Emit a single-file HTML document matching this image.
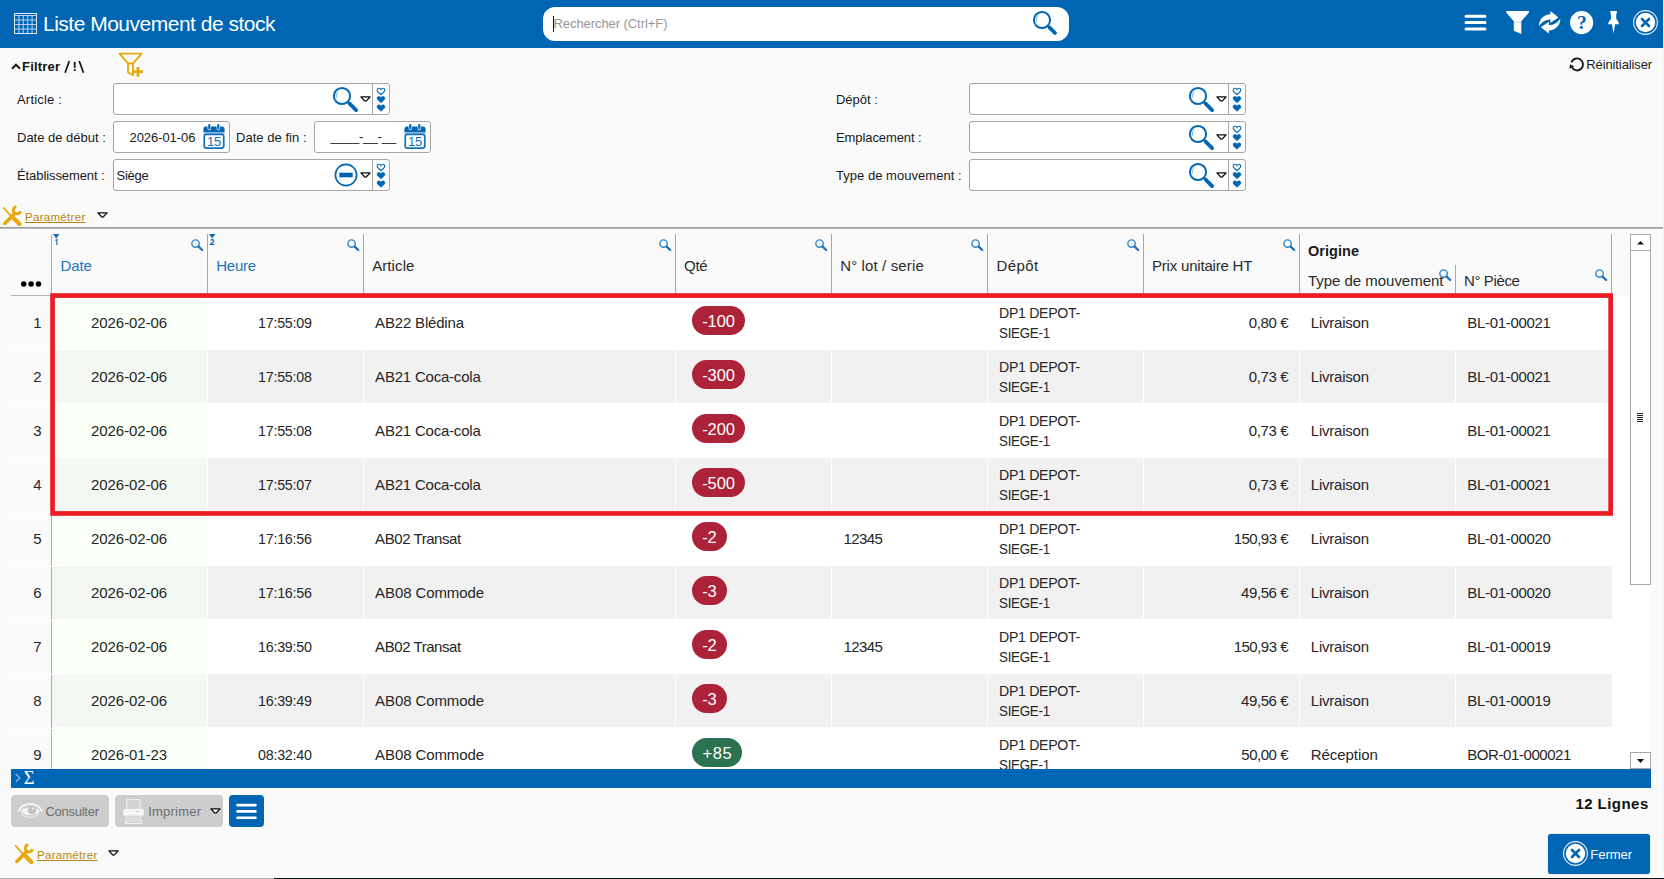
<!DOCTYPE html>
<html lang="fr">
<head>
<meta charset="utf-8">
<title>Liste Mouvement de stock</title>
<style>
*{box-sizing:border-box;margin:0;padding:0}
html,body{width:1664px;height:879px;overflow:hidden;background:#fafafa;font-family:"Liberation Sans",sans-serif;color:#1a1a1a}
body{position:relative}
div,span,i,b,u{position:absolute;white-space:nowrap}
svg{position:absolute;overflow:visible}
.t{transform-origin:0 50%}
#hdr{left:0;top:0;width:1663px;height:48px;background:#0066b3}
#search{left:543px;top:7px;width:525.5px;height:33.7px;background:#fff;border-radius:12px}
#search i{left:10px;top:9px;width:1px;height:16px;background:#112}
.inp{height:32px;width:277px;background:#fff;border:1px solid #a6a6a6;border-radius:3px}
.inp .sep{left:258px;top:0;width:1px;height:30px;background:#a6a6a6}
.hsep{width:1px;background:#a8a8a8}
.row{left:52px;width:1560px;height:54px}
.row.e{background:#f1f1f1;height:53px}
.row .d{left:1px;top:0;width:154px;height:53px;background:#fafff8}
.row.e .d{background:#f3f8f2}
.row.e u{top:0;width:1px;height:53px;background:#fff}
.nl{left:11px;width:41px;height:1px;background:#fff}
.bd{height:29px;border-radius:15px;background:#ac2239}
.bd.g{background:#2d7250}
.btn{height:32px;top:795px;border-radius:4px;background:#cdcdcd}
</style>
</head>
<body>
<div id="hdr">
<svg style="left:14px;top:13px" width="23" height="21" viewBox="0 0 23 21"><g fill="none"><rect x=".5" y=".5" width="22" height="20" stroke="#dfeaf5"/><path d="M.5 2.5h22M.5 7h22M.5 11.5h22M.5 16h22M4.9 2.5v18M9.3 2.5v18M13.7 2.5v18M18.1 2.5v18" stroke="#b9d2ea"/></g></svg>
<span style="top:12px;font-size:21px;line-height:24px;color:#fff;letter-spacing:-0.5px;left:43px;">Liste Mouvement de stock</span>
<div id="search"><i></i><span style="top:9px;font-size:13px;line-height:16px;color:#969696;letter-spacing:-0.07px;left:10.5px;">Rechercher (Ctrl+F)</span><svg style="left:489.1px;top:2.9000000000000004px" width="26" height="26" viewBox="-10 -10 26 26"><circle r="8.1" fill="#fff" stroke="#0066b3" stroke-width="2"/><path d="M-5.6 1.6a5.8 5.8 0 0 1 2.2 -6.4" fill="none" stroke="#7fb2dc" stroke-width="1"/><path d="M7.6 7.6L13 13" stroke="#0066b3" stroke-width="3.8" stroke-linecap="round"/><path d="M5.6 5.6l1.4 1.4" stroke="#0066b3" stroke-width="2"/></svg></div>
<svg style="left:1464px;top:14px" width="23" height="17" viewBox="0 0 23 17"><g stroke="#fff" stroke-width="3" stroke-linecap="round"><path d="M2 2.3h19M2 8.6h19M2 14.9h19"/></g></svg>
<svg style="left:1506px;top:10.9px" width="23.2" height="23.2" viewBox="0 0 23.2 23.2"><path d="M1.2 0h20.8c1 0 1.4 1 .8 1.7L15.3 10.2v12.9l-7.5-3.3v-9.6L.4 1.7C-.2 1 .2 0 1.2 0z" fill="#fff"/><path d="M8 11.1h7" stroke="#0066b3" stroke-width=".6" opacity=".45"/></svg>
<svg style="left:1539px;top:11px" width="21.4" height="23" viewBox="0 0 21.4 23"><g fill="#fff"><path d="M11.4 0L19.5 6.4L11.4 11.8V8.5C7 8.3 3 10.6 0 14.9C0 8 5 3.4 11.4 3.2Z"/><path d="M11.4 0L19.5 6.4L11.4 11.8V8.5C7 8.3 3 10.6 0 14.9C0 8 5 3.4 11.4 3.2Z" transform="rotate(180 10.65 11.3)"/></g></svg>
<svg style="left:1569.7px;top:10.8px" width="23.2" height="23.2" viewBox="-11.6 -11.6 23.2 23.2"><circle r="11.6" fill="#fff"/><text x="0.3" y="6.6" text-anchor="middle" font-family="Liberation Serif" font-weight="bold" font-size="19.5" fill="#0066b3">?</text></svg>
<svg style="left:1607.9px;top:10.8px" width="11.1" height="22.8" viewBox="0 0 11.1 22.8"><path d="M2.2 0H9L8.2 4.6V8C9.6 9.4 10.6 11 11.1 13.2H7.1L5.55 22.8L4 13.2H0C.5 11 1.5 9.4 3 8V4.6Z" fill="#fff"/></svg>
<svg style="left:1633px;top:9.899999999999999px" width="25" height="25" viewBox="-12.5 -12.5 25 25"><circle r="11.9" fill="none" stroke="#fff" stroke-width="1.1" opacity=".92"/><circle r="9.7" fill="#fff"/><path d="M-3.5 -3.5l7 7M3.5 -3.5l-7 7" stroke="#0066b3" stroke-width="2.6" stroke-linecap="round"/></svg>
</div>
<svg style="left:11px;top:62px" width="10" height="8" viewBox="0 0 10 8"><path d="M1 6.7L5 2.7l4 4" fill="none" stroke="#1c1c1c" stroke-width="2.1"/></svg>
<span style="top:59px;font-size:13px;line-height:16px;color:#111;font-weight:bold;letter-spacing:0.19px;left:22px;">Filtrer</span>
<span style="top:59px;font-size:13px;line-height:16px;color:#111;font-weight:bold;left:72.5px;">!</span>
<svg style="left:64px;top:60px" width="21" height="14" viewBox="0 0 21 14"><path d="M1.1 12.7L5.3 1M15.2 1L19.5 12.7" stroke="#111" stroke-width="1.7"/></svg>
<svg style="left:118px;top:52px" width="26" height="26" viewBox="0 0 26 26"><g fill="none" stroke="#e6a90a" stroke-width="1.8" stroke-linejoin="round"><path d="M1.5 1.7H23.7L15 11.4V23.3L10 20.2V11.4Z"/><path d="M10 11.4H15"/></g><path d="M20 14.9v9.9M15.2 19.7h9.7" stroke="#e6a90a" stroke-width="2.8"/></svg>
<svg style="left:1570px;top:57px" width="15" height="15" viewBox="0 0 15 15"><path d="M1.4 5.3A6 6 0 1 1 1.9 10.6" fill="none" stroke="#1c1c1c" stroke-width="1.9"/><path d="M-.800 11.7L.200 7.3L4.3 9.6Z" fill="#1c1c1c"/></svg>
<span style="top:57px;font-size:13px;line-height:16px;color:#1a1a1a;letter-spacing:-0.11px;left:1586.3px;">Réinitialiser</span>
<span style="top:92px;font-size:13px;line-height:16px;color:#1a1a1a;letter-spacing:0.19px;left:17px;">Article :</span>
<span style="top:130px;font-size:13px;line-height:16px;color:#1a1a1a;letter-spacing:-0.01px;left:17px;">Date de début :</span>
<span style="top:130px;font-size:13px;line-height:16px;color:#1a1a1a;letter-spacing:0.04px;left:236px;">Date de fin :</span>
<span style="top:168px;font-size:13px;line-height:16px;color:#1a1a1a;letter-spacing:-0.09px;left:17px;">Établissement :</span>
<span style="top:92px;font-size:13px;line-height:16px;color:#1a1a1a;letter-spacing:-0.02px;left:836px;">Dépôt :</span>
<span style="top:130px;font-size:13px;line-height:16px;color:#1a1a1a;letter-spacing:-0.09px;left:836px;">Emplacement :</span>
<span style="top:168px;font-size:13px;line-height:16px;color:#1a1a1a;letter-spacing:0.03px;left:836px;">Type de mouvement :</span>
<div class="inp" style="left:113px;top:83px"><svg style="left:218.2px;top:2px" width="26" height="26" viewBox="-10 -10 26 26"><circle r="8.1" fill="#fff" stroke="#0066b3" stroke-width="2"/><path d="M-5.6 1.6a5.8 5.8 0 0 1 2.2 -6.4" fill="none" stroke="#7fb2dc" stroke-width="1"/><path d="M7.6 7.6L14.1 14.1" stroke="#0066b3" stroke-width="3.8" stroke-linecap="round"/><path d="M5.6 5.6l1.4 1.4" stroke="#0066b3" stroke-width="2"/></svg><svg style="left:246px;top:12px" width="11" height="7" viewBox="0 0 11 7"><path d="M.900 .900H10.1L6.4 4.7Q5.5 5.5 4.6 4.7Z" fill="#fff" stroke="#0c0c0c" stroke-width="1.25" stroke-linejoin="round"/></svg><i class="sep"></i><svg style="left:262px;top:3.2px" width="10" height="26" viewBox="-5 -4 10 26"><g transform="scale(.92)"><path d="M0 -1.6C-0.9 -3.6 -4.2 -3.4 -4.2 -0.9C-4.2 1 -1.6 2.2 0 3.9C1.6 2.2 4.2 1 4.2 -0.9C4.2 -3.4 0.9 -3.6 0 -1.6z" fill="#fff" stroke="#0066b3" stroke-width="1.2"/></g><g transform="translate(0,8.2) scale(.92)"><path d="M0 -1.6C-0.9 -3.6 -4.2 -3.4 -4.2 -0.9C-4.2 1 -1.6 2.2 0 3.9C1.6 2.2 4.2 1 4.2 -0.9C4.2 -3.4 0.9 -3.6 0 -1.6z" fill="#0066b3" stroke="#0066b3" stroke-width=".800"/></g><g transform="translate(0,16.6) scale(.92)"><path d="M0 -1.6C-0.9 -3.6 -4.2 -3.4 -4.2 -0.9C-4.2 1 -1.6 2.2 0 3.9C1.6 2.2 4.2 1 4.2 -0.9C4.2 -3.4 0.9 -3.6 0 -1.6z" fill="#0066b3" stroke="#0066b3" stroke-width=".800"/></g></svg></div>
<div class="inp" style="left:113px;top:121px;width:117px"><span style="top:8px;font-size:13px;line-height:16px;color:#1a1a1a;letter-spacing:-0.07px;left:15.5px;">2026-01-06</span><svg style="left:88.6px;top:2px" width="22" height="25.2" viewBox="0 0 22 25.2"><path d="M.400 7.9V5a2.6 2.6 0 0 1 2.6-2.6h16a2.6 2.6 0 0 1 2.6 2.6V7.9z" fill="#0066b3"/><rect x=".400" y="7.9" width="21.2" height="1.8" fill="#7fb2dc"/><rect x="1.25" y="10.3" width="19.5" height="13.9" rx="2.1" fill="#fff" stroke="#1470bb" stroke-width="1.7"/><g fill="#0066b3" stroke="#fff" stroke-width="1.3" paint-order="stroke"><rect x="5.2" y="0" width="2.2" height="5.5" rx="1.1"/><rect x="14.2" y="0" width="2.2" height="5.5" rx="1.1"/></g><text x="11.1" y="21.9" text-anchor="middle" font-family="Liberation Sans" font-size="13" fill="#1470bb" letter-spacing="-.2">15</text></svg></div>
<div class="inp" style="left:314px;top:121px;width:117px"><span style="top:7.3px;font-size:13px;line-height:16px;color:#1a1a1a;letter-spacing:-0.09px;left:15.5px;">____-__-__</span><svg style="left:88.6px;top:2px" width="22" height="25.2" viewBox="0 0 22 25.2"><path d="M.400 7.9V5a2.6 2.6 0 0 1 2.6-2.6h16a2.6 2.6 0 0 1 2.6 2.6V7.9z" fill="#0066b3"/><rect x=".400" y="7.9" width="21.2" height="1.8" fill="#7fb2dc"/><rect x="1.25" y="10.3" width="19.5" height="13.9" rx="2.1" fill="#fff" stroke="#1470bb" stroke-width="1.7"/><g fill="#0066b3" stroke="#fff" stroke-width="1.3" paint-order="stroke"><rect x="5.2" y="0" width="2.2" height="5.5" rx="1.1"/><rect x="14.2" y="0" width="2.2" height="5.5" rx="1.1"/></g><text x="11.1" y="21.9" text-anchor="middle" font-family="Liberation Sans" font-size="13" fill="#1470bb" letter-spacing="-.2">15</text></svg></div>
<div class="inp" style="left:113px;top:159px"><span style="top:8px;font-size:13px;line-height:16px;color:#1a1a1a;letter-spacing:-0.26px;left:2.5px;">Siège</span><svg style="left:219.7px;top:3px" width="24" height="24" viewBox="0 0 24 24"><circle cx="12" cy="12" r="10.6" fill="#fff" stroke="#0066b3" stroke-width="1.7"/><rect x="5.3" y="9.7" width="13.4" height="4.6" fill="#0066b3"/></svg><svg style="left:246px;top:12px" width="11" height="7" viewBox="0 0 11 7"><path d="M.900 .900H10.1L6.4 4.7Q5.5 5.5 4.6 4.7Z" fill="#fff" stroke="#0c0c0c" stroke-width="1.25" stroke-linejoin="round"/></svg><i class="sep"></i><svg style="left:262px;top:3.2px" width="10" height="26" viewBox="-5 -4 10 26"><g transform="scale(.92)"><path d="M0 -1.6C-0.9 -3.6 -4.2 -3.4 -4.2 -0.9C-4.2 1 -1.6 2.2 0 3.9C1.6 2.2 4.2 1 4.2 -0.9C4.2 -3.4 0.9 -3.6 0 -1.6z" fill="#fff" stroke="#0066b3" stroke-width="1.2"/></g><g transform="translate(0,8.2) scale(.92)"><path d="M0 -1.6C-0.9 -3.6 -4.2 -3.4 -4.2 -0.9C-4.2 1 -1.6 2.2 0 3.9C1.6 2.2 4.2 1 4.2 -0.9C4.2 -3.4 0.9 -3.6 0 -1.6z" fill="#0066b3" stroke="#0066b3" stroke-width=".800"/></g><g transform="translate(0,16.6) scale(.92)"><path d="M0 -1.6C-0.9 -3.6 -4.2 -3.4 -4.2 -0.9C-4.2 1 -1.6 2.2 0 3.9C1.6 2.2 4.2 1 4.2 -0.9C4.2 -3.4 0.9 -3.6 0 -1.6z" fill="#0066b3" stroke="#0066b3" stroke-width=".800"/></g></svg></div>
<div class="inp" style="left:969px;top:83px"><svg style="left:218.2px;top:2px" width="26" height="26" viewBox="-10 -10 26 26"><circle r="8.1" fill="#fff" stroke="#0066b3" stroke-width="2"/><path d="M-5.6 1.6a5.8 5.8 0 0 1 2.2 -6.4" fill="none" stroke="#7fb2dc" stroke-width="1"/><path d="M7.6 7.6L14.1 14.1" stroke="#0066b3" stroke-width="3.8" stroke-linecap="round"/><path d="M5.6 5.6l1.4 1.4" stroke="#0066b3" stroke-width="2"/></svg><svg style="left:246px;top:12px" width="11" height="7" viewBox="0 0 11 7"><path d="M.900 .900H10.1L6.4 4.7Q5.5 5.5 4.6 4.7Z" fill="#fff" stroke="#0c0c0c" stroke-width="1.25" stroke-linejoin="round"/></svg><i class="sep"></i><svg style="left:262px;top:3.2px" width="10" height="26" viewBox="-5 -4 10 26"><g transform="scale(.92)"><path d="M0 -1.6C-0.9 -3.6 -4.2 -3.4 -4.2 -0.9C-4.2 1 -1.6 2.2 0 3.9C1.6 2.2 4.2 1 4.2 -0.9C4.2 -3.4 0.9 -3.6 0 -1.6z" fill="#fff" stroke="#0066b3" stroke-width="1.2"/></g><g transform="translate(0,8.2) scale(.92)"><path d="M0 -1.6C-0.9 -3.6 -4.2 -3.4 -4.2 -0.9C-4.2 1 -1.6 2.2 0 3.9C1.6 2.2 4.2 1 4.2 -0.9C4.2 -3.4 0.9 -3.6 0 -1.6z" fill="#0066b3" stroke="#0066b3" stroke-width=".800"/></g><g transform="translate(0,16.6) scale(.92)"><path d="M0 -1.6C-0.9 -3.6 -4.2 -3.4 -4.2 -0.9C-4.2 1 -1.6 2.2 0 3.9C1.6 2.2 4.2 1 4.2 -0.9C4.2 -3.4 0.9 -3.6 0 -1.6z" fill="#0066b3" stroke="#0066b3" stroke-width=".800"/></g></svg></div>
<div class="inp" style="left:969px;top:121px"><svg style="left:218.2px;top:2px" width="26" height="26" viewBox="-10 -10 26 26"><circle r="8.1" fill="#fff" stroke="#0066b3" stroke-width="2"/><path d="M-5.6 1.6a5.8 5.8 0 0 1 2.2 -6.4" fill="none" stroke="#7fb2dc" stroke-width="1"/><path d="M7.6 7.6L14.1 14.1" stroke="#0066b3" stroke-width="3.8" stroke-linecap="round"/><path d="M5.6 5.6l1.4 1.4" stroke="#0066b3" stroke-width="2"/></svg><svg style="left:246px;top:12px" width="11" height="7" viewBox="0 0 11 7"><path d="M.900 .900H10.1L6.4 4.7Q5.5 5.5 4.6 4.7Z" fill="#fff" stroke="#0c0c0c" stroke-width="1.25" stroke-linejoin="round"/></svg><i class="sep"></i><svg style="left:262px;top:3.2px" width="10" height="26" viewBox="-5 -4 10 26"><g transform="scale(.92)"><path d="M0 -1.6C-0.9 -3.6 -4.2 -3.4 -4.2 -0.9C-4.2 1 -1.6 2.2 0 3.9C1.6 2.2 4.2 1 4.2 -0.9C4.2 -3.4 0.9 -3.6 0 -1.6z" fill="#fff" stroke="#0066b3" stroke-width="1.2"/></g><g transform="translate(0,8.2) scale(.92)"><path d="M0 -1.6C-0.9 -3.6 -4.2 -3.4 -4.2 -0.9C-4.2 1 -1.6 2.2 0 3.9C1.6 2.2 4.2 1 4.2 -0.9C4.2 -3.4 0.9 -3.6 0 -1.6z" fill="#0066b3" stroke="#0066b3" stroke-width=".800"/></g><g transform="translate(0,16.6) scale(.92)"><path d="M0 -1.6C-0.9 -3.6 -4.2 -3.4 -4.2 -0.9C-4.2 1 -1.6 2.2 0 3.9C1.6 2.2 4.2 1 4.2 -0.9C4.2 -3.4 0.9 -3.6 0 -1.6z" fill="#0066b3" stroke="#0066b3" stroke-width=".800"/></g></svg></div>
<div class="inp" style="left:969px;top:159px"><svg style="left:218.2px;top:2px" width="26" height="26" viewBox="-10 -10 26 26"><circle r="8.1" fill="#fff" stroke="#0066b3" stroke-width="2"/><path d="M-5.6 1.6a5.8 5.8 0 0 1 2.2 -6.4" fill="none" stroke="#7fb2dc" stroke-width="1"/><path d="M7.6 7.6L14.1 14.1" stroke="#0066b3" stroke-width="3.8" stroke-linecap="round"/><path d="M5.6 5.6l1.4 1.4" stroke="#0066b3" stroke-width="2"/></svg><svg style="left:246px;top:12px" width="11" height="7" viewBox="0 0 11 7"><path d="M.900 .900H10.1L6.4 4.7Q5.5 5.5 4.6 4.7Z" fill="#fff" stroke="#0c0c0c" stroke-width="1.25" stroke-linejoin="round"/></svg><i class="sep"></i><svg style="left:262px;top:3.2px" width="10" height="26" viewBox="-5 -4 10 26"><g transform="scale(.92)"><path d="M0 -1.6C-0.9 -3.6 -4.2 -3.4 -4.2 -0.9C-4.2 1 -1.6 2.2 0 3.9C1.6 2.2 4.2 1 4.2 -0.9C4.2 -3.4 0.9 -3.6 0 -1.6z" fill="#fff" stroke="#0066b3" stroke-width="1.2"/></g><g transform="translate(0,8.2) scale(.92)"><path d="M0 -1.6C-0.9 -3.6 -4.2 -3.4 -4.2 -0.9C-4.2 1 -1.6 2.2 0 3.9C1.6 2.2 4.2 1 4.2 -0.9C4.2 -3.4 0.9 -3.6 0 -1.6z" fill="#0066b3" stroke="#0066b3" stroke-width=".800"/></g><g transform="translate(0,16.6) scale(.92)"><path d="M0 -1.6C-0.9 -3.6 -4.2 -3.4 -4.2 -0.9C-4.2 1 -1.6 2.2 0 3.9C1.6 2.2 4.2 1 4.2 -0.9C4.2 -3.4 0.9 -3.6 0 -1.6z" fill="#0066b3" stroke="#0066b3" stroke-width=".800"/></g></svg></div>
<svg style="left:2px;top:205px" width="21" height="21" viewBox="0 0 21 21"><g stroke="#e8a80c" stroke-linecap="round" fill="none"><path d="M2.8 18.4L11.8 9.4" stroke-width="3.5"/><path d="M18.6 6.2a3.7 3.7 0 1 1 -4.3 -4.6" stroke-width="2.7" stroke-linecap="butt"/><path d="M1.6 2.9L9.6 11.6" stroke-width="1.6"/><path d="M11.9 13.5l5.5 5.5" stroke-width="4.2"/></g></svg>
<span style="top:210px;font-size:11.5px;line-height:15px;color:#b5850f;letter-spacing:0.3px;left:25px;text-decoration:underline;text-underline-offset:.600px;">Paramétrer</span>
<svg style="left:96.7px;top:212px" width="11" height="7" viewBox="0 0 11 7"><path d="M.900 .900H10.1L6.4 4.7Q5.5 5.5 4.6 4.7Z" fill="#fff" stroke="#0c0c0c" stroke-width="1.25" stroke-linejoin="round"/></svg>
<div style="left:0;top:227px;width:1663px;height:2px;background:linear-gradient(#8e8e8e,#c9c9c9)"></div>
<i class="hsep" style="left:51px;top:234px;height:535px;background:#adadad"></i>
<i class="hsep" style="left:207px;top:234px;height:59px"></i>
<i class="hsep" style="left:363px;top:234px;height:59px"></i>
<i class="hsep" style="left:675px;top:234px;height:59px"></i>
<i class="hsep" style="left:831px;top:234px;height:59px"></i>
<i class="hsep" style="left:987px;top:234px;height:59px"></i>
<i class="hsep" style="left:1143px;top:234px;height:59px"></i>
<i class="hsep" style="left:1299px;top:234px;height:59px"></i>
<i class="hsep" style="left:1455px;top:265px;height:28px"></i>
<i class="hsep" style="left:1611px;top:234px;height:59px"></i>
<span style="top:257px;font-size:15px;line-height:18px;color:#1e73be;letter-spacing:-0.13px;left:60.5px;">Date</span>
<span style="top:257px;font-size:15px;line-height:18px;color:#1e73be;letter-spacing:-0.29px;left:216.3px;">Heure</span>
<span style="top:257px;font-size:15px;line-height:18px;color:#2b2b2b;letter-spacing:0.09px;left:372.2px;">Article</span>
<span style="top:257px;font-size:15px;line-height:18px;color:#2b2b2b;letter-spacing:-0.29px;left:684px;">Qté</span>
<span style="top:257px;font-size:15px;line-height:18px;color:#2b2b2b;letter-spacing:0.13px;left:840.2px;">N° lot / serie</span>
<span style="top:257px;font-size:15px;line-height:18px;color:#2b2b2b;letter-spacing:0.44px;left:996.4px;">Dépôt</span>
<span style="top:257px;font-size:15px;line-height:18px;color:#2b2b2b;letter-spacing:-0.2px;left:1152px;">Prix unitaire HT</span>
<span style="top:242px;font-size:14.5px;line-height:18px;color:#1a1a1a;font-weight:bold;letter-spacing:0.04px;left:1308px;">Origine</span>
<span style="top:272px;font-size:15px;line-height:18px;color:#2b2b2b;letter-spacing:-0.03px;left:1308px;">Type de mouvement</span>
<span style="top:272px;font-size:15px;line-height:18px;color:#2b2b2b;letter-spacing:-0.38px;left:1464px;">N° Pièce</span>
<svg style="left:191px;top:239px" width="12.4" height="12.4" viewBox="0 0 13 13"><circle cx="4.8" cy="4.8" r="3.9" fill="none" stroke="#2e86cf" stroke-width="1.5"/><path d="M8 8l3.8 3.6" stroke="#1b6fb8" stroke-width="2.2" stroke-linecap="round"/></svg>
<svg style="left:347px;top:239px" width="12.4" height="12.4" viewBox="0 0 13 13"><circle cx="4.8" cy="4.8" r="3.9" fill="none" stroke="#2e86cf" stroke-width="1.5"/><path d="M8 8l3.8 3.6" stroke="#1b6fb8" stroke-width="2.2" stroke-linecap="round"/></svg>
<svg style="left:659px;top:239px" width="12.4" height="12.4" viewBox="0 0 13 13"><circle cx="4.8" cy="4.8" r="3.9" fill="none" stroke="#2e86cf" stroke-width="1.5"/><path d="M8 8l3.8 3.6" stroke="#1b6fb8" stroke-width="2.2" stroke-linecap="round"/></svg>
<svg style="left:815px;top:239px" width="12.4" height="12.4" viewBox="0 0 13 13"><circle cx="4.8" cy="4.8" r="3.9" fill="none" stroke="#2e86cf" stroke-width="1.5"/><path d="M8 8l3.8 3.6" stroke="#1b6fb8" stroke-width="2.2" stroke-linecap="round"/></svg>
<svg style="left:971px;top:239px" width="12.4" height="12.4" viewBox="0 0 13 13"><circle cx="4.8" cy="4.8" r="3.9" fill="none" stroke="#2e86cf" stroke-width="1.5"/><path d="M8 8l3.8 3.6" stroke="#1b6fb8" stroke-width="2.2" stroke-linecap="round"/></svg>
<svg style="left:1127px;top:239px" width="12.4" height="12.4" viewBox="0 0 13 13"><circle cx="4.8" cy="4.8" r="3.9" fill="none" stroke="#2e86cf" stroke-width="1.5"/><path d="M8 8l3.8 3.6" stroke="#1b6fb8" stroke-width="2.2" stroke-linecap="round"/></svg>
<svg style="left:1283px;top:239px" width="12.4" height="12.4" viewBox="0 0 13 13"><circle cx="4.8" cy="4.8" r="3.9" fill="none" stroke="#2e86cf" stroke-width="1.5"/><path d="M8 8l3.8 3.6" stroke="#1b6fb8" stroke-width="2.2" stroke-linecap="round"/></svg>
<svg style="left:1439px;top:269px" width="12.4" height="12.4" viewBox="0 0 13 13"><circle cx="4.8" cy="4.8" r="3.9" fill="none" stroke="#2e86cf" stroke-width="1.5"/><path d="M8 8l3.8 3.6" stroke="#1b6fb8" stroke-width="2.2" stroke-linecap="round"/></svg>
<svg style="left:1595px;top:269px" width="12.4" height="12.4" viewBox="0 0 13 13"><circle cx="4.8" cy="4.8" r="3.9" fill="none" stroke="#2e86cf" stroke-width="1.5"/><path d="M8 8l3.8 3.6" stroke="#1b6fb8" stroke-width="2.2" stroke-linecap="round"/></svg>
<svg style="left:52.9px;top:233.8px" width="7" height="12" viewBox="0 0 7 12"><path d="M0 0h6.4L3.2 4.4z" fill="#1467b4"/><path d="M2.4 6.4L3.9 5.5V10.9" fill="none" stroke="#1467b4" stroke-width="1.15"/></svg>
<svg style="left:208.9px;top:233.8px" width="7" height="12" viewBox="0 0 7 12"><path d="M0 0h6.4L3.2 4.4z" fill="#1467b4"/><path d="M1.5 6.3Q3.2 4.9 4.7 6.1Q5.2 7.4 1.5 10.3H5.3" fill="none" stroke="#1467b4" stroke-width="1.15"/></svg>
<svg style="left:20.9px;top:280.5px" width="21" height="6" viewBox="0 0 21 6"><circle cx="2.75" cy="3" r="2.75"/><circle cx="10.1" cy="3" r="2.75"/><circle cx="17.5" cy="3" r="2.75"/></svg>
<i style="left:11px;top:295px;width:41px;height:1px;background:#b5b5b5"></i>
<div style="left:52px;top:296px;width:1599px;height:473px;background:#fff"></div>
<div id="tb" style="left:0;top:296px;width:1664px;height:473px;overflow:hidden">
<span style="top:17px;font-size:15px;line-height:20px;color:#262626;right:1622.3px;">1</span>
<div class="row" style="top:0px"><i class="d"></i></div>
<span style="top:17px;font-size:15px;line-height:20px;color:#262626;letter-spacing:-0.06px;left:91px;">2026-02-06</span>
<span style="top:17px;font-size:15px;line-height:20px;color:#262626;letter-spacing:-0.26px;left:258.3px;transform:scaleX(0.953);transform-origin:0 50%;">17:55:09</span>
<span style="top:17px;font-size:15px;line-height:20px;color:#262626;letter-spacing:-0.18px;left:375.1px;">AB22 Blédina</span>
<i class="bd" style="left:692px;top:10px;width:53px"></i>
<span style="top:14.5px;font-size:16.5px;line-height:20px;color:#fff;letter-spacing:-0.04px;left:702.15px;">-100</span>
<span style="top:7px;font-size:15px;line-height:20px;color:#262626;letter-spacing:-0.32px;left:999.3px;transform:scaleX(0.942);transform-origin:0 50%;">DP1 DEPOT-</span>
<span style="top:27px;font-size:15px;line-height:20px;color:#262626;letter-spacing:-0.33px;left:999.3px;transform:scaleX(0.893);transform-origin:0 50%;">SIEGE-1</span>
<span style="top:17px;font-size:15px;line-height:20px;color:#262626;letter-spacing:-0.4px;right:375.9px;">0,80 €</span>
<span style="top:17px;font-size:15px;line-height:20px;color:#262626;letter-spacing:-0.22px;left:1310.8px;">Livraison</span>
<span style="top:17px;font-size:15px;line-height:20px;color:#262626;letter-spacing:-0.31px;left:1467.3px;">BL-01-00021</span>
<span style="top:71px;font-size:15px;line-height:20px;color:#262626;right:1622.3px;">2</span>
<i class="nl" style="top:54px"></i>
<div class="row e" style="top:54px"><i class="d"></i><u style="left:155px"></u><u style="left:311px"></u><u style="left:623px"></u><u style="left:779px"></u><u style="left:935px"></u><u style="left:1091px"></u><u style="left:1247px"></u><u style="left:1403px"></u></div>
<span style="top:71px;font-size:15px;line-height:20px;color:#262626;letter-spacing:-0.06px;left:91px;">2026-02-06</span>
<span style="top:71px;font-size:15px;line-height:20px;color:#262626;letter-spacing:-0.26px;left:258.3px;transform:scaleX(0.953);transform-origin:0 50%;">17:55:08</span>
<span style="top:71px;font-size:15px;line-height:20px;color:#262626;letter-spacing:-0.21px;left:375.1px;">AB21 Coca-cola</span>
<i class="bd" style="left:692px;top:64px;width:53px"></i>
<span style="top:68.5px;font-size:16.5px;line-height:20px;color:#fff;letter-spacing:-0.04px;left:702.15px;">-300</span>
<span style="top:61px;font-size:15px;line-height:20px;color:#262626;letter-spacing:-0.32px;left:999.3px;transform:scaleX(0.942);transform-origin:0 50%;">DP1 DEPOT-</span>
<span style="top:81px;font-size:15px;line-height:20px;color:#262626;letter-spacing:-0.33px;left:999.3px;transform:scaleX(0.893);transform-origin:0 50%;">SIEGE-1</span>
<span style="top:71px;font-size:15px;line-height:20px;color:#262626;letter-spacing:-0.4px;right:375.9px;">0,73 €</span>
<span style="top:71px;font-size:15px;line-height:20px;color:#262626;letter-spacing:-0.22px;left:1310.8px;">Livraison</span>
<span style="top:71px;font-size:15px;line-height:20px;color:#262626;letter-spacing:-0.31px;left:1467.3px;">BL-01-00021</span>
<span style="top:125px;font-size:15px;line-height:20px;color:#262626;right:1622.3px;">3</span>
<i class="nl" style="top:108px"></i>
<div class="row" style="top:108px"><i class="d"></i></div>
<span style="top:125px;font-size:15px;line-height:20px;color:#262626;letter-spacing:-0.06px;left:91px;">2026-02-06</span>
<span style="top:125px;font-size:15px;line-height:20px;color:#262626;letter-spacing:-0.26px;left:258.3px;transform:scaleX(0.953);transform-origin:0 50%;">17:55:08</span>
<span style="top:125px;font-size:15px;line-height:20px;color:#262626;letter-spacing:-0.21px;left:375.1px;">AB21 Coca-cola</span>
<i class="bd" style="left:692px;top:118px;width:53px"></i>
<span style="top:122.5px;font-size:16.5px;line-height:20px;color:#fff;letter-spacing:-0.04px;left:702.15px;">-200</span>
<span style="top:115px;font-size:15px;line-height:20px;color:#262626;letter-spacing:-0.32px;left:999.3px;transform:scaleX(0.942);transform-origin:0 50%;">DP1 DEPOT-</span>
<span style="top:135px;font-size:15px;line-height:20px;color:#262626;letter-spacing:-0.33px;left:999.3px;transform:scaleX(0.893);transform-origin:0 50%;">SIEGE-1</span>
<span style="top:125px;font-size:15px;line-height:20px;color:#262626;letter-spacing:-0.4px;right:375.9px;">0,73 €</span>
<span style="top:125px;font-size:15px;line-height:20px;color:#262626;letter-spacing:-0.22px;left:1310.8px;">Livraison</span>
<span style="top:125px;font-size:15px;line-height:20px;color:#262626;letter-spacing:-0.31px;left:1467.3px;">BL-01-00021</span>
<span style="top:179px;font-size:15px;line-height:20px;color:#262626;right:1622.3px;">4</span>
<i class="nl" style="top:162px"></i>
<div class="row e" style="top:162px"><i class="d"></i><u style="left:155px"></u><u style="left:311px"></u><u style="left:623px"></u><u style="left:779px"></u><u style="left:935px"></u><u style="left:1091px"></u><u style="left:1247px"></u><u style="left:1403px"></u></div>
<span style="top:179px;font-size:15px;line-height:20px;color:#262626;letter-spacing:-0.06px;left:91px;">2026-02-06</span>
<span style="top:179px;font-size:15px;line-height:20px;color:#262626;letter-spacing:-0.26px;left:258.3px;transform:scaleX(0.953);transform-origin:0 50%;">17:55:07</span>
<span style="top:179px;font-size:15px;line-height:20px;color:#262626;letter-spacing:-0.21px;left:375.1px;">AB21 Coca-cola</span>
<i class="bd" style="left:692px;top:172px;width:53px"></i>
<span style="top:176.5px;font-size:16.5px;line-height:20px;color:#fff;letter-spacing:-0.04px;left:702.15px;">-500</span>
<span style="top:169px;font-size:15px;line-height:20px;color:#262626;letter-spacing:-0.32px;left:999.3px;transform:scaleX(0.942);transform-origin:0 50%;">DP1 DEPOT-</span>
<span style="top:189px;font-size:15px;line-height:20px;color:#262626;letter-spacing:-0.33px;left:999.3px;transform:scaleX(0.893);transform-origin:0 50%;">SIEGE-1</span>
<span style="top:179px;font-size:15px;line-height:20px;color:#262626;letter-spacing:-0.4px;right:375.9px;">0,73 €</span>
<span style="top:179px;font-size:15px;line-height:20px;color:#262626;letter-spacing:-0.22px;left:1310.8px;">Livraison</span>
<span style="top:179px;font-size:15px;line-height:20px;color:#262626;letter-spacing:-0.31px;left:1467.3px;">BL-01-00021</span>
<span style="top:233px;font-size:15px;line-height:20px;color:#262626;right:1622.3px;">5</span>
<i class="nl" style="top:216px"></i>
<div class="row" style="top:216px"><i class="d"></i></div>
<span style="top:233px;font-size:15px;line-height:20px;color:#262626;letter-spacing:-0.06px;left:91px;">2026-02-06</span>
<span style="top:233px;font-size:15px;line-height:20px;color:#262626;letter-spacing:-0.26px;left:258.3px;transform:scaleX(0.953);transform-origin:0 50%;">17:16:56</span>
<span style="top:233px;font-size:15px;line-height:20px;color:#262626;letter-spacing:-0.44px;left:375.1px;">AB02 Transat</span>
<i class="bd" style="left:692px;top:226px;width:34.7px"></i>
<span style="top:230.5px;font-size:16.5px;line-height:20px;color:#fff;letter-spacing:-0.07px;left:702.15px;">-2</span>
<span style="top:233px;font-size:15px;line-height:20px;color:#262626;letter-spacing:-0.58px;left:843.5px;">12345</span>
<span style="top:223px;font-size:15px;line-height:20px;color:#262626;letter-spacing:-0.32px;left:999.3px;transform:scaleX(0.942);transform-origin:0 50%;">DP1 DEPOT-</span>
<span style="top:243px;font-size:15px;line-height:20px;color:#262626;letter-spacing:-0.33px;left:999.3px;transform:scaleX(0.893);transform-origin:0 50%;">SIEGE-1</span>
<span style="top:233px;font-size:15px;line-height:20px;color:#262626;letter-spacing:-0.51px;right:376.01px;">150,93 €</span>
<span style="top:233px;font-size:15px;line-height:20px;color:#262626;letter-spacing:-0.22px;left:1310.8px;">Livraison</span>
<span style="top:233px;font-size:15px;line-height:20px;color:#262626;letter-spacing:-0.31px;left:1467.3px;">BL-01-00020</span>
<span style="top:287px;font-size:15px;line-height:20px;color:#262626;right:1622.3px;">6</span>
<i class="nl" style="top:270px"></i>
<div class="row e" style="top:270px"><i class="d"></i><u style="left:155px"></u><u style="left:311px"></u><u style="left:623px"></u><u style="left:779px"></u><u style="left:935px"></u><u style="left:1091px"></u><u style="left:1247px"></u><u style="left:1403px"></u></div>
<span style="top:287px;font-size:15px;line-height:20px;color:#262626;letter-spacing:-0.06px;left:91px;">2026-02-06</span>
<span style="top:287px;font-size:15px;line-height:20px;color:#262626;letter-spacing:-0.26px;left:258.3px;transform:scaleX(0.953);transform-origin:0 50%;">17:16:56</span>
<span style="top:287px;font-size:15px;line-height:20px;color:#262626;letter-spacing:-0.1px;left:375.1px;">AB08 Commode</span>
<i class="bd" style="left:692px;top:280px;width:34.7px"></i>
<span style="top:284.5px;font-size:16.5px;line-height:20px;color:#fff;letter-spacing:-0.07px;left:702.15px;">-3</span>
<span style="top:277px;font-size:15px;line-height:20px;color:#262626;letter-spacing:-0.32px;left:999.3px;transform:scaleX(0.942);transform-origin:0 50%;">DP1 DEPOT-</span>
<span style="top:297px;font-size:15px;line-height:20px;color:#262626;letter-spacing:-0.33px;left:999.3px;transform:scaleX(0.893);transform-origin:0 50%;">SIEGE-1</span>
<span style="top:287px;font-size:15px;line-height:20px;color:#262626;letter-spacing:-0.44px;right:375.94px;">49,56 €</span>
<span style="top:287px;font-size:15px;line-height:20px;color:#262626;letter-spacing:-0.22px;left:1310.8px;">Livraison</span>
<span style="top:287px;font-size:15px;line-height:20px;color:#262626;letter-spacing:-0.31px;left:1467.3px;">BL-01-00020</span>
<span style="top:341px;font-size:15px;line-height:20px;color:#262626;right:1622.3px;">7</span>
<i class="nl" style="top:324px"></i>
<div class="row" style="top:324px"><i class="d"></i></div>
<span style="top:341px;font-size:15px;line-height:20px;color:#262626;letter-spacing:-0.06px;left:91px;">2026-02-06</span>
<span style="top:341px;font-size:15px;line-height:20px;color:#262626;letter-spacing:-0.26px;left:258.3px;transform:scaleX(0.953);transform-origin:0 50%;">16:39:50</span>
<span style="top:341px;font-size:15px;line-height:20px;color:#262626;letter-spacing:-0.44px;left:375.1px;">AB02 Transat</span>
<i class="bd" style="left:692px;top:334px;width:34.7px"></i>
<span style="top:338.5px;font-size:16.5px;line-height:20px;color:#fff;letter-spacing:-0.07px;left:702.15px;">-2</span>
<span style="top:341px;font-size:15px;line-height:20px;color:#262626;letter-spacing:-0.58px;left:843.5px;">12345</span>
<span style="top:331px;font-size:15px;line-height:20px;color:#262626;letter-spacing:-0.32px;left:999.3px;transform:scaleX(0.942);transform-origin:0 50%;">DP1 DEPOT-</span>
<span style="top:351px;font-size:15px;line-height:20px;color:#262626;letter-spacing:-0.33px;left:999.3px;transform:scaleX(0.893);transform-origin:0 50%;">SIEGE-1</span>
<span style="top:341px;font-size:15px;line-height:20px;color:#262626;letter-spacing:-0.51px;right:376.01px;">150,93 €</span>
<span style="top:341px;font-size:15px;line-height:20px;color:#262626;letter-spacing:-0.22px;left:1310.8px;">Livraison</span>
<span style="top:341px;font-size:15px;line-height:20px;color:#262626;letter-spacing:-0.31px;left:1467.3px;">BL-01-00019</span>
<span style="top:395px;font-size:15px;line-height:20px;color:#262626;right:1622.3px;">8</span>
<i class="nl" style="top:378px"></i>
<div class="row e" style="top:378px"><i class="d"></i><u style="left:155px"></u><u style="left:311px"></u><u style="left:623px"></u><u style="left:779px"></u><u style="left:935px"></u><u style="left:1091px"></u><u style="left:1247px"></u><u style="left:1403px"></u></div>
<span style="top:395px;font-size:15px;line-height:20px;color:#262626;letter-spacing:-0.06px;left:91px;">2026-02-06</span>
<span style="top:395px;font-size:15px;line-height:20px;color:#262626;letter-spacing:-0.26px;left:258.3px;transform:scaleX(0.953);transform-origin:0 50%;">16:39:49</span>
<span style="top:395px;font-size:15px;line-height:20px;color:#262626;letter-spacing:-0.1px;left:375.1px;">AB08 Commode</span>
<i class="bd" style="left:692px;top:388px;width:34.7px"></i>
<span style="top:392.5px;font-size:16.5px;line-height:20px;color:#fff;letter-spacing:-0.07px;left:702.15px;">-3</span>
<span style="top:385px;font-size:15px;line-height:20px;color:#262626;letter-spacing:-0.32px;left:999.3px;transform:scaleX(0.942);transform-origin:0 50%;">DP1 DEPOT-</span>
<span style="top:405px;font-size:15px;line-height:20px;color:#262626;letter-spacing:-0.33px;left:999.3px;transform:scaleX(0.893);transform-origin:0 50%;">SIEGE-1</span>
<span style="top:395px;font-size:15px;line-height:20px;color:#262626;letter-spacing:-0.44px;right:375.94px;">49,56 €</span>
<span style="top:395px;font-size:15px;line-height:20px;color:#262626;letter-spacing:-0.22px;left:1310.8px;">Livraison</span>
<span style="top:395px;font-size:15px;line-height:20px;color:#262626;letter-spacing:-0.31px;left:1467.3px;">BL-01-00019</span>
<span style="top:449px;font-size:15px;line-height:20px;color:#262626;right:1622.3px;">9</span>
<i class="nl" style="top:432px"></i>
<div class="row" style="top:432px"><i class="d"></i></div>
<span style="top:449px;font-size:15px;line-height:20px;color:#262626;letter-spacing:-0.06px;left:91px;">2026-01-23</span>
<span style="top:449px;font-size:15px;line-height:20px;color:#262626;letter-spacing:-0.26px;left:258.3px;transform:scaleX(0.953);transform-origin:0 50%;">08:32:40</span>
<span style="top:449px;font-size:15px;line-height:20px;color:#262626;letter-spacing:-0.1px;left:375.1px;">AB08 Commode</span>
<i class="bd g" style="left:692px;top:442px;width:49.8px"></i>
<span style="top:446.5px;font-size:16.5px;line-height:20px;color:#fff;letter-spacing:0.6px;left:702.4px;">+85</span>
<span style="top:439px;font-size:15px;line-height:20px;color:#262626;letter-spacing:-0.32px;left:999.3px;transform:scaleX(0.942);transform-origin:0 50%;">DP1 DEPOT-</span>
<span style="top:459px;font-size:15px;line-height:20px;color:#262626;letter-spacing:-0.33px;left:999.3px;transform:scaleX(0.893);transform-origin:0 50%;">SIEGE-1</span>
<span style="top:449px;font-size:15px;line-height:20px;color:#262626;letter-spacing:-0.47px;right:375.97px;">50,00 €</span>
<span style="top:449px;font-size:15px;line-height:20px;color:#262626;letter-spacing:-0.07px;left:1310.8px;">Réception</span>
<span style="top:449px;font-size:15px;line-height:20px;color:#262626;letter-spacing:-0.43px;left:1467.3px;">BOR-01-000021</span>
</div>
<svg style="left:0;top:0" width="1664" height="879" viewBox="0 0 1664 879"><rect x="52.55" y="295.55" width="1558.1" height="217.9" fill="none" stroke="#ed1c24" stroke-width="4.7"/></svg>
<div style="left:1630px;top:234px;width:21px;height:351px;background:#fff;border:1px solid #a9a9a9"></div>
<i style="left:1630px;top:250px;width:21px;height:1px;background:#a9a9a9"></i>
<svg style="left:1637px;top:241px" width="7" height="3.5" viewBox="0 0 7 3.5"><path d="M0 3.5h7L3.5 0z" fill="#111"/></svg>
<svg style="left:1637px;top:413px" width="7" height="9" viewBox="0 0 7 9"><path d="M0 .5h6M0 2.5h6M0 4.5h6M0 6.5h6M0 8.5h6" stroke="#1a1a1a" stroke-width="1"/></svg>
<div style="left:1630px;top:752px;width:21px;height:17px;background:#fff;border:1px solid #a9a9a9"></div>
<svg style="left:1637px;top:759px" width="7" height="4" viewBox="0 0 7 4"><path d="M0 0h7L3.5 4z" fill="#111"/></svg>
<div style="left:11px;top:769px;width:1640px;height:19px;background:#0066b3"></div>
<svg style="left:15px;top:773px" width="6" height="10" viewBox="0 0 6 10"><path d="M.800 1l4 3.9l-4 3.9" fill="none" stroke="#8fbde6" stroke-width="1.2"/></svg>
<span style="top:766.5px;font-size:18.5px;line-height:22px;color:#fff;font-family:'Liberation Serif',serif;left:23.8px;">Σ</span>
<div class="btn" style="left:11px;width:98px"><span style="top:9px;font-size:13px;line-height:16px;color:#6e6e6e;letter-spacing:-0.27px;left:34.5px;">Consulter</span><svg style="left:7px;top:8px" width="24.4" height="15.4" viewBox="0 0 24.4 15.4"><path d="M.600 7.8C4 1.6 9 .900 12.2 .900C15.4 .900 20.4 1.6 23.8 7.8" fill="none" stroke="#f6f6f6" stroke-width="1.9" stroke-linecap="round"/><path d="M2.6 8.2C6 3.4 18.4 3.4 21.8 8.2C18.4 13.4 6 13.4 2.6 8.2Z" fill="#f3f3f3"/><circle cx="14" cy="7.3" r="4.1" fill="#c2c2c2"/><circle cx="14.9" cy="5.6" r="1.1" fill="#f3f3f3"/><path d="M3 10.7C7 15.4 17.4 15.4 21.4 10.7" fill="none" stroke="#eee" stroke-width="1"/></svg></div>
<div class="btn" style="left:115px;width:108px"><span style="top:9px;font-size:13px;line-height:16px;color:#6e6e6e;letter-spacing:0.22px;left:33.2px;">Imprimer</span><svg style="left:8px;top:4px" width="21" height="25" viewBox="0 0 21 25"><rect x="3.8" y=".600" width="13.4" height="10" fill="#d3d3d3" stroke="#f0f0f0" stroke-width="1.1"/><rect x=".300" y="10" width="20.4" height="6.8" rx="1" fill="#f6f6f6"/><path d="M13 12.4h3.4" stroke="#c8c8c8" stroke-width="1"/><path d="M3.7 16.8L2.3 24.5H18.7L17.3 16.8" fill="#d6d6d6" stroke="#eee" stroke-width="1.1"/><path d="M4.6 19.6h11.8M4.2 22h12.6" stroke="#e6e6e6" stroke-width=".900"/></svg><svg style="left:94.8px;top:13px" width="11" height="7" viewBox="0 0 11 7"><path d="M.900 .900H10.1L6.4 4.7Q5.5 5.5 4.6 4.7Z" fill="#fff" stroke="#0c0c0c" stroke-width="1.25" stroke-linejoin="round"/></svg></div>
<div style="left:229px;top:795px;width:35px;height:32px;border-radius:4px;background:#0066b3"><svg style="left:7px;top:8px" width="21" height="16" viewBox="0 0 21 16"><g stroke="#fff" stroke-width="2.6" stroke-linecap="round"><path d="M1.5 2.1h18M1.5 8.4h18M1.5 14.7h18"/></g></svg></div>
<span style="top:795px;font-size:15px;line-height:18px;color:#111;font-weight:bold;letter-spacing:0.46px;left:1575.4px;">12 Lignes</span>
<svg style="left:14px;top:843px" width="21" height="21" viewBox="0 0 21 21"><g stroke="#e8a80c" stroke-linecap="round" fill="none"><path d="M2.8 18.4L11.8 9.4" stroke-width="3.5"/><path d="M18.6 6.2a3.7 3.7 0 1 1 -4.3 -4.6" stroke-width="2.7" stroke-linecap="butt"/><path d="M1.6 2.9L9.6 11.6" stroke-width="1.6"/><path d="M11.9 13.5l5.5 5.5" stroke-width="4.2"/></g></svg>
<span style="top:848px;font-size:11.5px;line-height:15px;color:#b5850f;letter-spacing:0.3px;left:37px;text-decoration:underline;text-underline-offset:.600px;">Paramétrer</span>
<svg style="left:108px;top:850px" width="11" height="7" viewBox="0 0 11 7"><path d="M.900 .900H10.1L6.4 4.7Q5.5 5.5 4.6 4.7Z" fill="#fff" stroke="#0c0c0c" stroke-width="1.25" stroke-linejoin="round"/></svg>
<div style="left:1548px;top:834px;width:102px;height:40px;border-radius:3px;background:#0066b3;box-shadow:0 0 1px #6c8fb0"><svg style="left:14.899999999999999px;top:7.199999999999999px" width="25" height="25" viewBox="-12.5 -12.5 25 25"><circle r="11.9" fill="none" stroke="#fff" stroke-width="1.1" opacity=".92"/><circle r="9.7" fill="#fff"/><path d="M-3.5 -3.5l7 7M3.5 -3.5l-7 7" stroke="#0066b3" stroke-width="2.6" stroke-linecap="round"/></svg><span style="top:13px;font-size:13px;line-height:16px;color:#fff;letter-spacing:-0.04px;left:42.3px;">Fermer</span></div>
<i style="left:1663px;top:0;width:1px;height:879px;background:#f4f4f4"></i>
<i style="left:0;top:878px;width:274px;height:1px;background:#b4b4b4"></i>
<i style="left:274px;top:878px;width:1390px;height:1px;background:#0a1418"></i>
</body>
</html>
